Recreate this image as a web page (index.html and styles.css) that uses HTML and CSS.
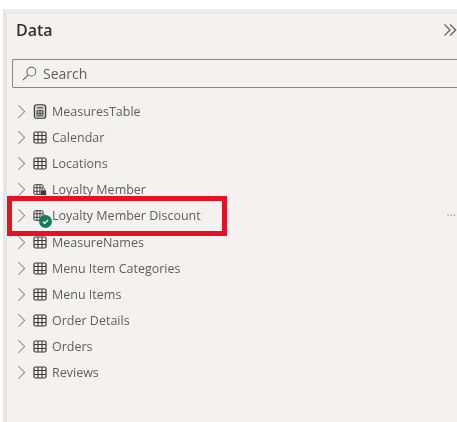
FILE: index.html
```html
<!DOCTYPE html>
<html>
<head>
    <link rel="stylesheet" href="styles.css">
</head>
<body>
    <svg class="icon-defs" width="0" height="0">
        <symbol id="chevron" viewBox="0 0 10 16">
            <path d="M1.5 1 L8.5 8 L1.5 15" fill="none" stroke="#9a9896" stroke-width="1.2"/>
        </symbol>
        <symbol id="table" viewBox="0 0 14 14">
            <rect x="1" y="1.5" width="12" height="11" rx="1.5" fill="none" stroke="#3b3a39" stroke-width="1.2"/>
            <path d="M1 5 H13 M1 9 H13 M5 1.5 V12.5 M9 1.5 V12.5" fill="none" stroke="#3b3a39" stroke-width="1.1"/>
        </symbol>
        <symbol id="calc" viewBox="0 0 14 16">
            <rect x="1" y="0.8" width="12" height="14.4" rx="2.5" fill="#d2d0ce" stroke="#3b3a39" stroke-width="1.3"/>
            <path d="M3.8 4 H10.2 M3.8 7.2 H10.2 V12.6 H3.8 Z M7 7.2 V12.6 M3.8 9.9 H10.2" fill="none" stroke="#3b3a39" stroke-width="1"/>
        </symbol>
        <symbol id="table-lock" viewBox="0 0 16 14">
            <path d="M9 12.5 H2.5 Q1 12.5 1 11 V3 Q1 1.5 2.5 1.5 H10 Q11.5 1.5 11.5 3 V5 M1 5 H11.5 M1 9 H8 M4.5 1.5 V12.5 M8 1.5 V12.5" fill="none" stroke="#3b3a39" stroke-width="1.1"/>
            <rect x="9" y="8" width="6" height="5.5" fill="#3b3a39"/>
            <path d="M10.5 8 V6.5 Q12 4.5 13.5 6.5 V8" fill="none" stroke="#3b3a39"/>
        </symbol>
    </svg>

    <div class="panel">
        <div class="panel-head">
            <h3>Data</h3>
            <svg class="collapse" viewBox="0 0 16 14">
                <path d="M1.5 1 L7.5 7 L1.5 13 M7.5 1 L13.5 7 L7.5 13" fill="none" stroke="#605e5c" stroke-width="1.4"/>
            </svg>
        </div>

        <div class="search">
            <svg class="search-icon" viewBox="0 0 16 16">
                <circle cx="10" cy="6" r="4.7" fill="none" stroke="#605e5c" stroke-width="1.1"/>
                <path d="M6.6 9.4 L1 15" fill="none" stroke="#605e5c" stroke-width="1.1"/>
            </svg>
            <span>Search</span>
        </div>

        <ul class="fields">
            <li><svg class="chev"><use href="#chevron"/></svg><svg class="tbl"><use href="#calc"/></svg>MeasuresTable</li>
            <li><svg class="chev"><use href="#chevron"/></svg><svg class="tbl"><use href="#table"/></svg>Calendar</li>
            <li><svg class="chev"><use href="#chevron"/></svg><svg class="tbl"><use href="#table"/></svg>Locations</li>
            <li><svg class="chev"><use href="#chevron"/></svg><svg class="tbl"><use href="#table-lock"/></svg>Loyalty Member</li>
            <li class="selected">
                <svg class="chev"><use href="#chevron"/></svg><svg class="tbl"><use href="#table-lock"/></svg>Loyalty Member Discount
                <svg class="status" viewBox="0 0 12 12">
                    <circle cx="6" cy="6" r="6" fill="#107c5c"/>
                    <path d="M3.6 6.2 L5.2 7.6 L8.4 4.6" fill="none" stroke="#fff" stroke-width="1.3"/>
                </svg>
                <span class="more">···</span>
                <div class="highlight"></div>
            </li>
            <li><svg class="chev"><use href="#chevron"/></svg><svg class="tbl"><use href="#table"/></svg>MeasureNames</li>
            <li><svg class="chev"><use href="#chevron"/></svg><svg class="tbl"><use href="#table"/></svg>Menu Item Categories</li>
            <li><svg class="chev"><use href="#chevron"/></svg><svg class="tbl"><use href="#table"/></svg>Menu Items</li>
            <li><svg class="chev"><use href="#chevron"/></svg><svg class="tbl"><use href="#table"/></svg>Order Details</li>
            <li><svg class="chev"><use href="#chevron"/></svg><svg class="tbl"><use href="#table"/></svg>Orders</li>
            <li><svg class="chev"><use href="#chevron"/></svg><svg class="tbl"><use href="#table"/></svg>Reviews</li>
        </ul>
    </div>
</body>
</html>
```

FILE: styles.css
```css
html, body {
    height: 100%;
}
body {
    margin: 0;
    padding: 9px 0 0 3px;
    box-sizing: border-box;
    background-color: #fff;
    font-family: "Open Sans", Arial, sans-serif;
    overflow: hidden;
}
.icon-defs {
    position: absolute;
}
.panel {
    height: 100%;
    background-color: #f3f2f1;
    border-top: 5px solid #ebebea;
    border-left: 4px solid #e6e5e4;
    box-sizing: border-box;
    filter: blur(0.4px);
}
.panel-head {
    display: flex;
    justify-content: space-between;
    align-items: center;
    height: 32px;
    padding: 0 0 0 9px;
}
h3 {
    margin: 0;
    font-size: 16px;
    font-weight: 600;
    color: #323130;
}
.collapse {
    width: 15px;
    height: 14px;
    margin-right: -1px;
}
.search {
    display: flex;
    align-items: center;
    height: 29px;
    margin: 13px 0 0 5px;
    padding-left: 9px;
    box-sizing: border-box;
    border: 1px solid #8a8886;
    border-right: none;
    border-radius: 2px 0 0 2px;
    font-size: 14px;
    color: #605e5c;
}
.search-icon {
    width: 15px;
    height: 15px;
    margin-right: 6px;
}
.fields {
    list-style: none;
    margin: 10px 0 0;
    padding: 0;
}
.fields li {
    position: relative;
    display: flex;
    align-items: center;
    height: 26.2px;
    padding-left: 10px;
    font-size: 12.5px;
    color: #605e5c;
    white-space: nowrap;
}
.chev {
    width: 9px;
    height: 15px;
    margin-right: 7px;
}
.tbl {
    width: 14px;
    height: 15px;
    margin-right: 5px;
}
.status {
    position: absolute;
    left: 32px;
    top: 12px;
    width: 13px;
    height: 13px;
}
.more {
    position: absolute;
    right: 1px;
    top: 4px;
    font-size: 12px;
    color: #a19f9d;
}
.highlight {
    position: absolute;
    left: 0;
    top: -7px;
    width: 220px;
    height: 40px;
    box-sizing: border-box;
    border: 5px solid #e81123;
}
```
